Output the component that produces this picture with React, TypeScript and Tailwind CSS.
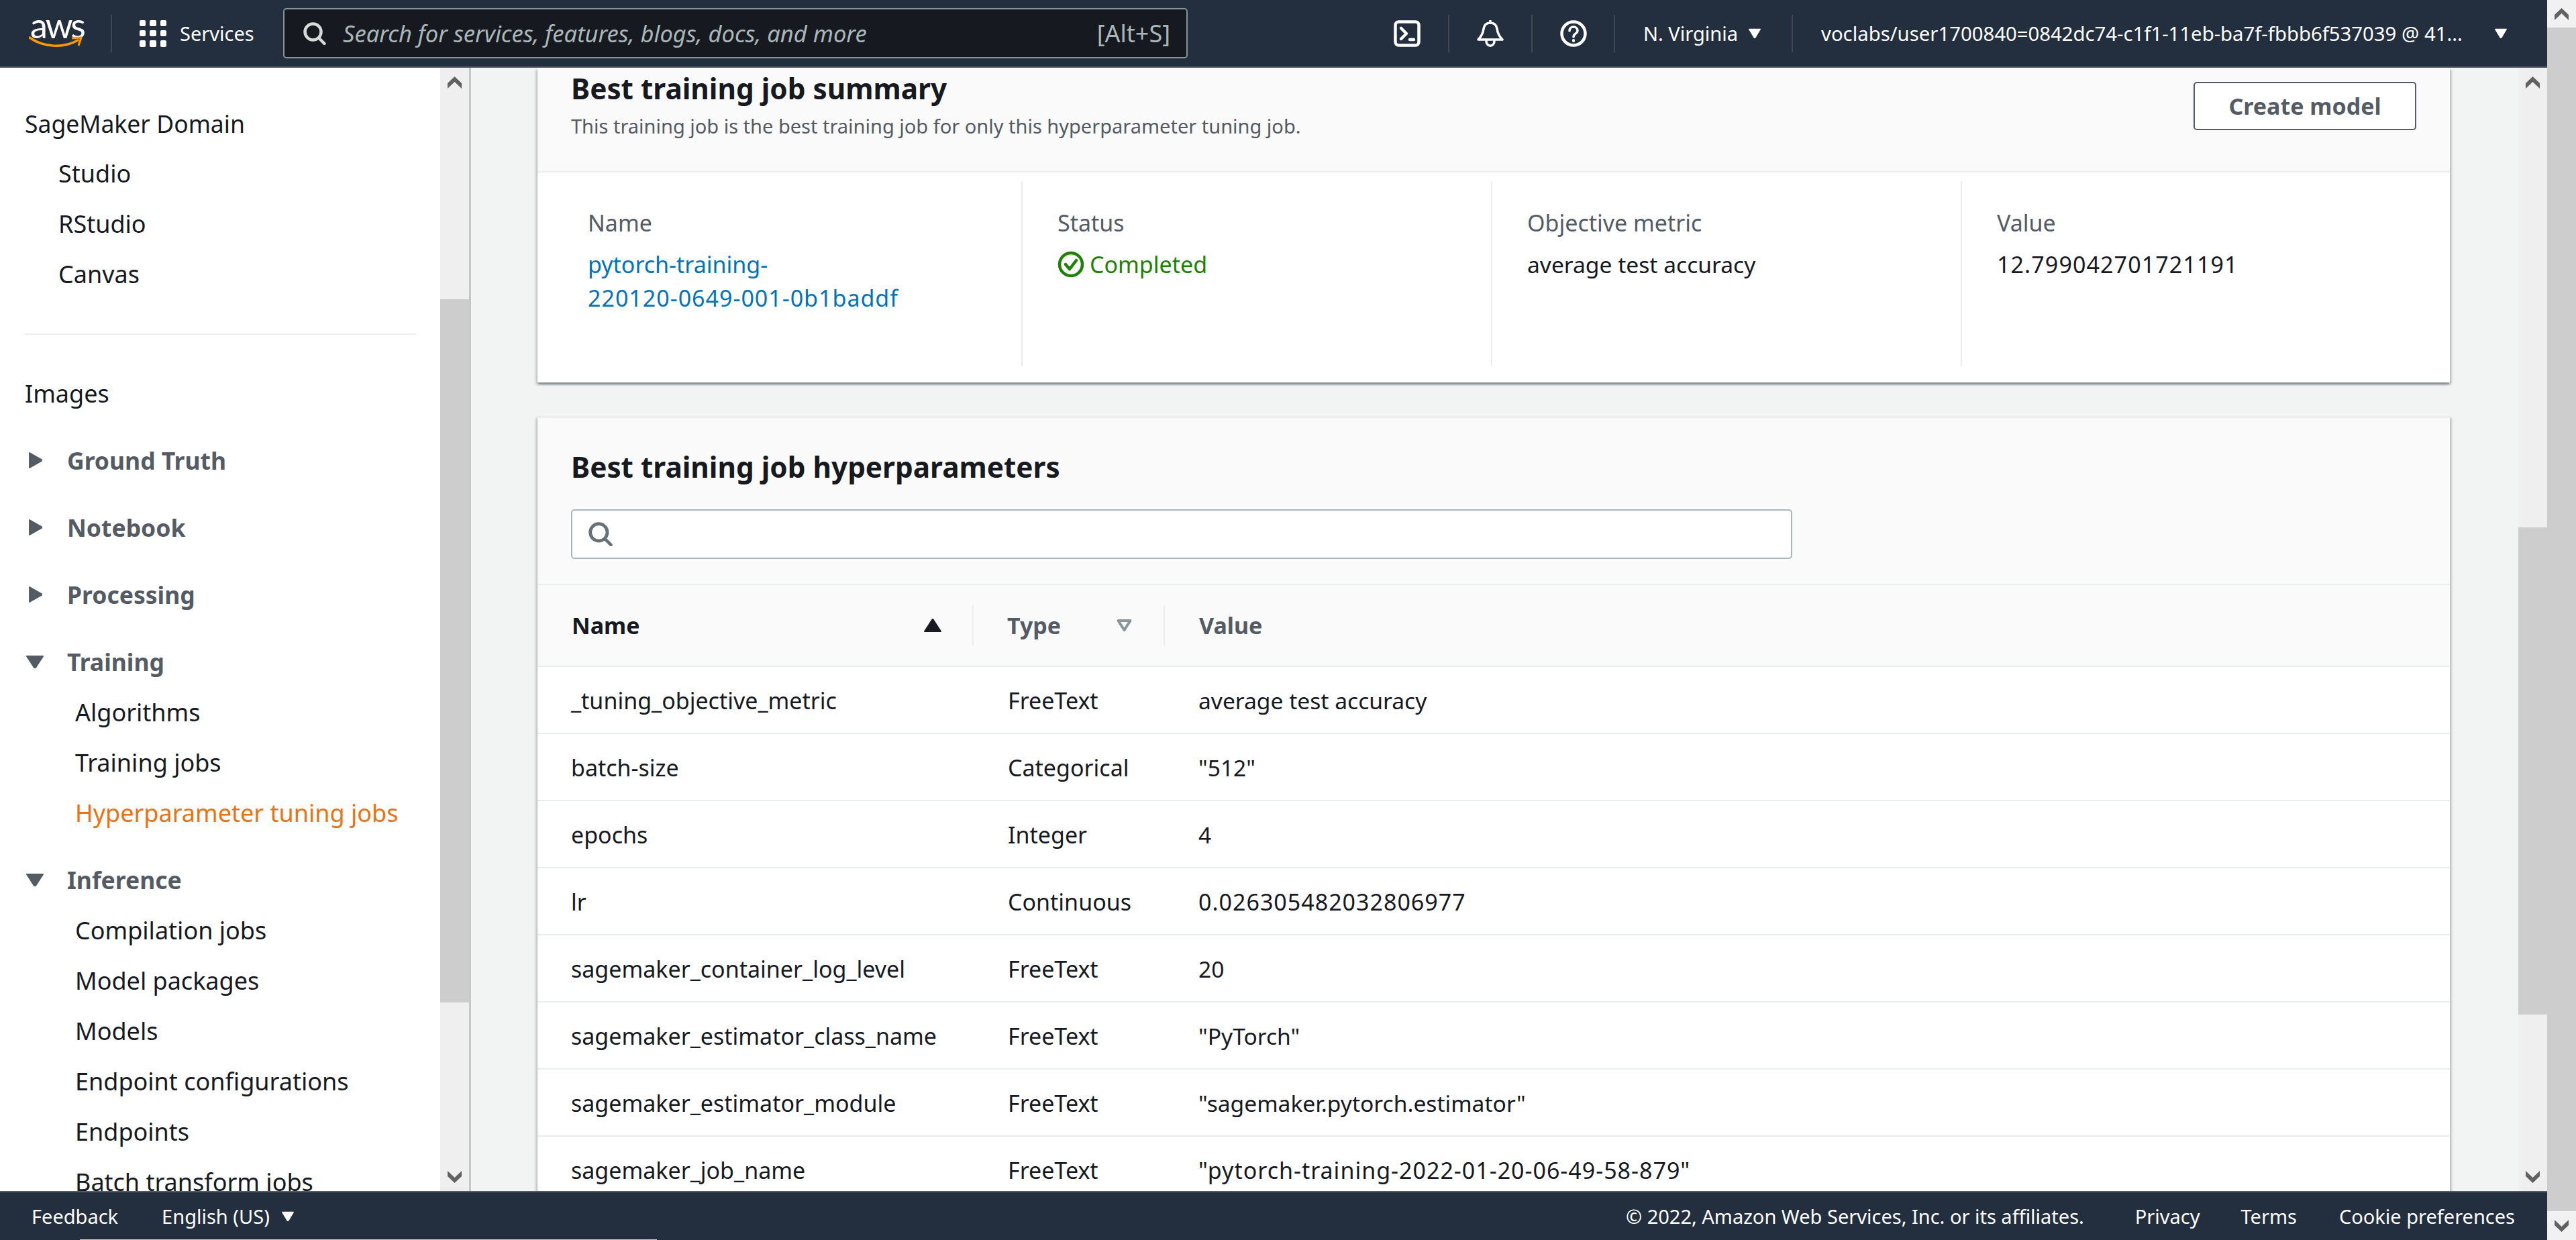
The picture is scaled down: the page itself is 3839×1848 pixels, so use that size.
import React from "react";

const Tri = ({ dir, cls }: { dir: "down" | "up" | "right"; cls: string }) => {
  const pts = dir === "down" ? "1,2 19,2 10,20" : dir === "up" ? "10,1 19,19 1,19" : "2,1 20,10 2,19";
  return (
    <svg viewBox="0 0 20 20" preserveAspectRatio="none" className={cls} fill="currentColor" stroke="currentColor" strokeWidth="2" strokeLinejoin="round">
      <polygon points={pts} />
    </svg>
  );
};

const Chevron = ({ up }: { up?: boolean }) => (
  <svg viewBox="0 0 21 18" className="w-[21px] h-[18px] text-[#616161]" fill="currentColor">
    <polygon points={up ? "10.5,0 21,10 21,18 10.5,8 0,18 0,10" : "10.5,18 21,8 21,0 10.5,10 0,0 0,8"} />
  </svg>
);

const Search = ({ cls }: { cls: string }) => (
  <svg viewBox="0 0 34 34" className={cls} fill="none" stroke="currentColor" strokeWidth="4.5" strokeLinecap="round">
    <circle cx="14.5" cy="14.5" r="12" />
    <line x1="23" y1="23.5" x2="31.5" y2="32" />
  </svg>
);

const Div = () => <div className="w-[2px] h-[56px] bg-[#414750] shrink-0" />;

const Scrollbar = ({ top, thumb, w = "w-[43px]", h = "h-[43px]" }: { top: string; thumb: string; w?: string; h?: string }) => (
  <div className={`${w} shrink-0 h-full bg-[#efefef] flex flex-col`}>
    <div className={`${h} shrink-0 flex items-center justify-center`}>
      <Chevron up />
    </div>
    <div className={top} />
    <div className={`${thumb} bg-[#cdcdcd]`} />
    <div className="flex-1" />
    <div className={`${h} shrink-0 flex items-center justify-center`}>
      <Chevron />
    </div>
  </div>
);

const NavItem = ({ label, active }: { label: string; active?: boolean }) => (
  <div className={`h-[75px] flex items-center pl-[112px] whitespace-nowrap ${active ? "text-[#ec7211]" : "text-[#16191f]"}`}>{label}</div>
);

const Section = ({ label, open }: { label: string; open?: boolean }) => (
  <div className="mt-[12px] h-[88px] pt-[12px] flex items-center font-bold text-[#545b64] text-[35.5px]">
    <div className="w-[63px] ml-[37px] shrink-0 flex items-center">
      {open ? <Tri dir="down" cls="w-[26px] h-[20px] ml-[2px]" /> : <Tri dir="right" cls="w-[21px] h-[24px] ml-[5px]" />}
    </div>
    <span>{label}</span>
  </div>
);

const rows = [
  ["_tuning_objective_metric", "FreeText", "average test accuracy"],
  ["batch-size", "Categorical", '"512"'],
  ["epochs", "Integer", "4"],
  ["lr", "Continuous", "0.026305482032806977"],
  ["sagemaker_container_log_level", "FreeText", "20"],
  ["sagemaker_estimator_class_name", "FreeText", '"PyTorch"'],
  ["sagemaker_estimator_module", "FreeText", '"sagemaker.pytorch.estimator"'],
  ["sagemaker_job_name", "FreeText", '"pytorch-training-2022-01-20-06-49-58-879"'],
];

const cardShadow =
  "shadow-[0_3px_3px_0_rgba(0,28,36,0.3),3px_3px_3px_0_rgba(0,28,36,0.15),-3px_3px_3px_0_rgba(0,28,36,0.15)]";

export default function App() {
  return (
    <div className="relative w-[3839px] h-[1848px] overflow-hidden flex font-['Noto_Sans',sans-serif] text-[34px] leading-[50px] text-[#16191f] bg-white">
      <div className="w-[3796px] h-full flex flex-col">
        {/* top bar */}
        <header className="h-[101px] shrink-0 bg-[#232f3e] border-b-[2px] border-[#545b64] flex items-center text-white text-[29px]">
          <div className="relative w-[165px] h-full shrink-0">
            <span className="absolute left-[45px] top-[9px] text-[52px] leading-[56px] tracking-[-3px] font-['Lato',sans-serif]">aws</span>
            <svg viewBox="0 0 80 20" className="absolute left-[43px] top-[54px] w-[80px] h-[20px]" fill="none">
              <path d="M1 2 C 22 17, 52 18, 73 6" stroke="#ff9900" strokeWidth="3.5" strokeLinecap="round" />
              <path d="M64 3 L78 2 L74 14" stroke="#ff9900" strokeWidth="3" strokeLinejoin="round" />
            </svg>
          </div>
          <Div />
          <div className="w-[41px] shrink-0" />
          <div className="grid grid-cols-3 gap-[6px] w-[40px] h-[40px] shrink-0">
            {Array.from({ length: 9 }).map((_, i) => (
              <div key={i} className="bg-white rounded-[2px]" />
            ))}
          </div>
          <span className="ml-[20px] w-[154px] shrink-0">Services</span>
          <div className="w-[1348px] h-[75px] shrink-0 rounded-[5px] border-[2px] border-[#879596] bg-[#16191f] flex items-center pl-[28px] pr-[24px] text-[#aab7b8] text-[34.5px]">
            <Search cls="w-[34px] h-[34px] text-[#d5dbdb]" />
            <span className="ml-[25px] italic flex-1 whitespace-nowrap">Search for services, features, blogs, docs, and more</span>
            <span className="text-[36px]">[Alt+S]</span>
          </div>
          <div className="w-[307px] shrink-0" />
          <svg viewBox="0 0 40 40" className="w-[40px] h-[40px] shrink-0" fill="none" stroke="white" strokeWidth="4.5" strokeLinecap="round" strokeLinejoin="round">
            <rect x="2.5" y="2.5" width="35" height="35" rx="5" />
            <polyline points="11,12 19,20 11,28" />
            <line x1="24" y1="29" x2="30" y2="29" />
          </svg>
          <div className="w-[41px] shrink-0" />
          <Div />
          <div className="w-[41px] shrink-0" />
          <svg viewBox="0 0 40 40" className="w-[40px] h-[40px] shrink-0" fill="none" stroke="white" strokeWidth="3.5" strokeLinecap="round" strokeLinejoin="round">
            <path d="M2 29 C 7 24, 9 20, 10 13 C 11 6, 15 4, 20 4 C 25 4, 29 6, 30 13 C 31 20, 33 24, 38 29 Z" />
            <path d="M20 1 L20 4" />
            <path d="M14 30 C 13 41, 27 41, 26 30" />
          </svg>
          <div className="w-[41px] shrink-0" />
          <Div />
          <div className="w-[41px] shrink-0" />
          <svg viewBox="0 0 40 40" className="w-[40px] h-[40px] shrink-0" fill="none" stroke="white" strokeWidth="4.5" strokeLinecap="round">
            <circle cx="20" cy="20" r="17.5" />
            <path d="M14 16 C 14 8, 26 8, 26 16 C 26 20, 20 20, 20 25" strokeWidth="3.5" />
            <line x1="20" y1="30" x2="20" y2="31" strokeWidth="4" />
          </svg>
          <div className="w-[40px] shrink-0" />
          <Div />
          <span className="ml-[42px] w-[157px] shrink-0 whitespace-nowrap">N. Virginia</span>
          <Tri dir="down" cls="w-[18px] h-[15px] shrink-0" />
          <div className="w-[46px] shrink-0" />
          <Div />
          <span className="ml-[42px] w-[1004px] shrink-0 whitespace-nowrap overflow-hidden text-[29.3px]">voclabs/user1700840=0842dc74-c1f1-11eb-ba7f-fbbb6f537039 @ 41...</span>
          <Tri dir="down" cls="w-[18px] h-[15px] shrink-0" />
        </header>

        {/* middle */}
        <div className="flex-1 min-h-0 flex">
          {/* nav */}
          <nav className="w-[656px] shrink-0 h-full overflow-hidden pt-[45px] bg-white text-[36px]">
            <div className="h-[75px] flex items-center pl-[37px] text-[35.5px]">SageMaker Domain</div>
            <div className="h-[75px] flex items-center pl-[87px]">Studio</div>
            <div className="h-[75px] flex items-center pl-[87px]">RStudio</div>
            <div className="h-[75px] flex items-center pl-[87px]">Canvas</div>
            <div className="ml-[37px] w-[583px] h-[2px] bg-[#eaeded] mt-[51px] mb-[50px]" />
            <div className="h-[75px] flex items-center pl-[37px]">Images</div>
            <Section label="Ground Truth" />
            <Section label="Notebook" />
            <Section label="Processing" />
            <Section label="Training" open />
            <NavItem label="Algorithms" />
            <NavItem label="Training jobs" />
            <NavItem label="Hyperparameter tuning jobs" active />
            <Section label="Inference" open />
            <NavItem label="Compilation jobs" />
            <NavItem label="Model packages" />
            <NavItem label="Models" />
            <NavItem label="Endpoint configurations" />
            <NavItem label="Endpoints" />
            <NavItem label="Batch transform jobs" />
          </nav>
          <Scrollbar top="h-[302px] shrink-0" thumb="h-[1048px] shrink-0" />
          <div className="w-[3px] shrink-0 bg-[#c4c8c9]" />

          {/* main */}
          <main className="flex-1 min-w-0 h-full overflow-hidden bg-[#f2f3f3] pl-[99px] pr-[102px]">
            <section className={`bg-white ${cardShadow} h-[469px]`}>
              <div className="h-[156px] bg-[#fafafa] border-b-[2px] border-[#eaeded] flex items-start pl-[50px] pr-[50px]">
                <div className="flex-1">
                  <h2 className="mt-[6px] text-[42.3px] leading-[50px] font-bold">Best training job summary</h2>
                  <p className="mt-[6px] text-[29px] leading-[50px] text-[#545b64]">This training job is the best training job for only this hyperparameter tuning job.</p>
                </div>
                <button className="mt-[21px] w-[332px] h-[72px] rounded-[5px] border-[2px] border-[#545b64] bg-white font-bold text-[#545b64]">Create model</button>
              </div>
              <div className="grid grid-cols-[723px_700px_700px_1fr] pt-[13px]">
                <div className="h-[275px] pl-[75px] pt-[37px] border-r-[2px] border-[#eaeded]">
                  <div className="text-[#545b64]">Name</div>
                  <div className="mt-[12px] text-[#0073bb] w-[560px]">
                    pytorch-training-
                    <br />
                    <span className="tracking-[1px]">220120-0649-001-0b1baddf</span>
                  </div>
                </div>
                <div className="h-[275px] pl-[52px] pt-[37px] border-r-[2px] border-[#eaeded]">
                  <div className="text-[#545b64]">Status</div>
                  <div className="mt-[12px] flex items-center text-[#1d8102]">
                    <svg viewBox="0 0 40 40" className="w-[40px] h-[40px] mr-[8px]" fill="none" stroke="currentColor" strokeWidth="4.5" strokeLinecap="round" strokeLinejoin="round">
                      <circle cx="20" cy="20" r="17" />
                      <polyline points="12,20 18,27 28,14" />
                    </svg>
                    Completed
                  </div>
                </div>
                <div className="h-[275px] pl-[52px] pt-[37px] border-r-[2px] border-[#eaeded]">
                  <div className="text-[#545b64]">Objective metric</div>
                  <div className="mt-[12px] text-[33.6px]">average test accuracy</div>
                </div>
                <div className="h-[275px] pl-[52px] pt-[37px]">
                  <div className="text-[#545b64]">Value</div>
                  <div className="mt-[12px] tracking-[1.1px]">12.799042701721191</div>
                </div>
              </div>
            </section>

            <section className={`mt-[50px] bg-white ${cardShadow} border-t-[3px] border-[#eaeded]`}>
              <div className="h-[249px] bg-[#fafafa] border-b-[2px] border-[#eaeded] pl-[50px] pt-[48px]">
                <h2 className="text-[42.3px] leading-[50px] font-bold">Best training job hyperparameters</h2>
                <div className="mt-[38px] w-[1820px] h-[74px] rounded-[5px] border-[2px] border-[#aab7b8] bg-white flex items-center pl-[24px]">
                  <Search cls="w-[36px] h-[36px] text-[#687078]" />
                </div>
              </div>
              <div className="h-[122px] bg-[#fafafa] border-b-[2px] border-[#eaeded] flex items-center font-bold text-[#545b64]">
                <div className="w-[650px] shrink-0 pl-[51px] pr-[46px] flex items-center justify-between h-[60px] border-r-[2px] border-[#eaeded] text-[#16191f]">
                  <span>Name</span>
                  <Tri dir="up" cls="w-[26px] h-[20px] text-[#16191f]" />
                </div>
                <div className="w-[285px] shrink-0 pl-[50px] pr-[45px] flex items-center justify-between h-[60px] border-r-[2px] border-[#eaeded]">
                  <span>Type</span>
                  <svg viewBox="0 0 24 20" className="w-[27px] h-[20px] text-[#879596]" fill="none" stroke="currentColor" strokeWidth="4" strokeLinejoin="round">
                    <polygon points="3,3 21,3 12,17" />
                  </svg>
                </div>
                <div className="pl-[51px]">Value</div>
              </div>
              {rows.map((r) => (
                <div key={r[0]} className="h-[100px] pt-[2px] border-b-[2px] border-[#eaeded] flex items-center">
                  <div className="w-[650px] shrink-0 pl-[50px]">{r[0]}</div>
                  <div className="w-[285px] shrink-0 pl-[51px]">{r[1]}</div>
                  <div className={`pl-[50px] ${/\d{4}/.test(r[2]) ? "tracking-[1px]" : "text-[33.6px]"}`}>{r[2]}</div>
                </div>
              ))}
            </section>
          </main>
          <Scrollbar top="h-[642px] shrink-0" thumb="h-[726px] shrink-0" />
        </div>

        {/* footer */}
        <footer className="h-[73px] shrink-0 bg-[#232f3e] border-t-[2px] border-[#545b64] flex items-center text-white text-[29px] pl-[47px] pr-[48px]">
          <span>Feedback</span>
          <span className="ml-[65px]">English (US)</span>
          <Tri dir="down" cls="w-[18px] h-[15px] ml-[18px]" />
          <span className="ml-auto">© 2022, Amazon Web Services, Inc. or its affiliates.</span>
          <span className="ml-[76px]">Privacy</span>
          <span className="ml-[61px]">Terms</span>
          <span className="ml-[63px]">Cookie preferences</span>
        </footer>
      </div>

      {/* window scrollbar */}
      <div className="w-[43px] shrink-0 h-full flex flex-col bg-[#cdcdcd]">
        <div className="h-[41px] shrink-0 bg-[#f1f1f1] flex items-center justify-center">
          <Chevron up />
        </div>
        <div className="flex-1" />
        <div className="h-[43px] shrink-0 bg-[#f1f1f1] flex items-center justify-center">
          <Chevron />
        </div>
      </div>

      {/* horizontal scrollbar sliver */}
      <div className="absolute left-[119px] bottom-0 w-[860px] h-[1px] bg-[#cdcdcd]" />
    </div>
  );
}
